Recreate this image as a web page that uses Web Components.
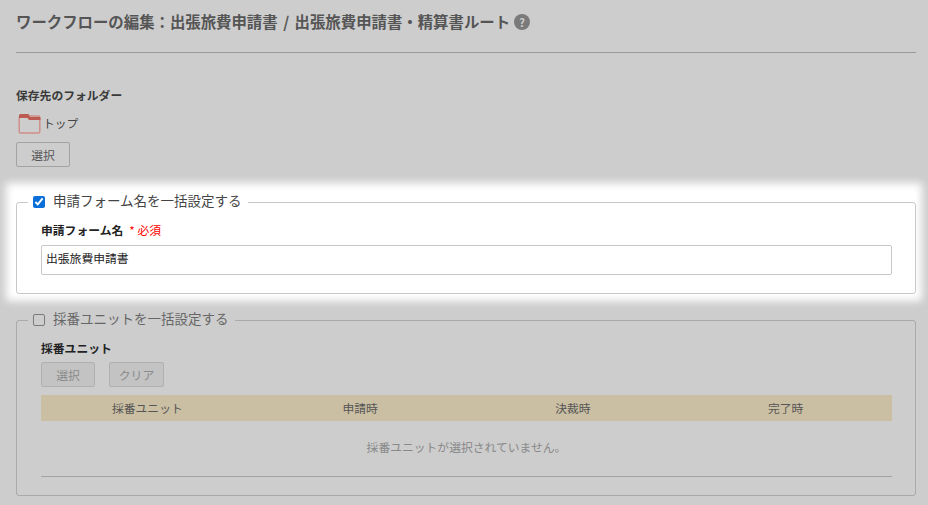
<!DOCTYPE html>
<html lang="ja">
<head>
<meta charset="utf-8">
<title>ワークフローの編集</title>
<style>
  html, body { margin: 0; height: 100%; overflow: hidden; }
  body {
    background: #cdcdcd;
    color: #333;
    font: 11.8px/1.5 "Noto Sans CJK JP", "Noto Sans", sans-serif;
  }
</style>
</head>
<body>
<wf-page>
  <wf-title slot="title">ワークフローの編集：出張旅費申請書 / 出張旅費申請書・精算書ルート</wf-title>
  <wf-folder label="保存先のフォルダー" name="トップ"></wf-folder>
  <wf-section checked highlight legend="申請フォーム名を一括設定する">
    <wf-label required>申請フォーム名</wf-label>
    <wf-input value="出張旅費申請書"></wf-input>
  </wf-section>
  <wf-section legend="採番ユニットを一括設定する">
    <wf-label>採番ユニット</wf-label>
    <wf-unit-table></wf-unit-table>
  </wf-section>
</wf-page>

<script>
class WfPage extends HTMLElement {
  connectedCallback() {
    this.attachShadow({ mode: 'open' });
    this.shadowRoot.innerHTML = `
      <style>
        :host { display: flex; flex-direction: column; padding: 0 12px 0 16px; }
      </style>
      <slot name="title"></slot>
      <slot></slot>
    `;
  }
}

class WfTitle extends HTMLElement {
  connectedCallback() {
    this.attachShadow({ mode: 'open' });
    this.shadowRoot.innerHTML = `
      <style>
        :host {
          display: flex;
          align-items: center;
          gap: 4px;
          padding-bottom: 10px;
          box-sizing: border-box;
          height: 53px;
          border-bottom: 1px solid #999;
          font-size: 15.4px;
          font-weight: 700;
          color: #555;
          word-spacing: 2px;
          line-height: 42px;
        }
        .help {
          width: 16px;
          height: 16px;
          margin-top: 2px;
          border-radius: 50%;
          background: #7a7a7a;
          color: #ccc;
          font-size: 11px;
          line-height: 16px;
          text-align: center;
        }
      </style>
      <slot></slot><span class="help">?</span>
    `;
  }
}

class WfButton extends HTMLElement {
  connectedCallback() {
    this.attachShadow({ mode: 'open' });
    this.shadowRoot.innerHTML = `
      <style>
        :host {
          display: block;
          box-sizing: border-box;
          width: 54px;
          height: 25px;
          border: 1px solid #a3a3a3;
          border-radius: 2px;
          color: #555;
          line-height: 23px;
          text-align: center;
        }
        :host([disabled]) {
          background: #c3c3c3;
          color: #8a8a8a;
          border-color: #b0b0b0;
        }
      </style>
      <slot></slot>
    `;
  }
}

class WfFolder extends HTMLElement {
  connectedCallback() {
    this.attachShadow({ mode: 'open' });
    this.shadowRoot.innerHTML = `
      <style>
        :host { display: block; margin-top: 32px; }
        .label { font-weight: 700; line-height: 20px; color: #3a3a3a; }
        .row { display: flex; align-items: center; height: 24px; margin-top: 6px; margin-bottom: 7px; color: #444; }
        svg { margin: 0 2px 0 2px; }
      </style>
      <div class="label">${this.getAttribute('label')}</div>
      <div class="row">
        <svg width="23" height="21" viewBox="0 0 23 21">
          <rect x="1.2" y="3" width="20.6" height="17" rx="1.5" fill="none" stroke="#cf8f89" stroke-width="1.5"/>
          <path d="M1 5V2.5Q1 1 2.5 1H10.5L12 4H21.5Q22.5 4 22.5 5.5V7H11L9.5 5Z" fill="#bd5a52"/>
        </svg>
        <span>${this.getAttribute('name')}</span>
      </div>
      <wf-button>選択</wf-button>
    `;
  }
}

class WfSection extends HTMLElement {
  connectedCallback() {
    const on = this.hasAttribute('checked');
    this.attachShadow({ mode: 'open' });
    this.shadowRoot.innerHTML = `
      <style>
        :host { display: block; margin-top: 16px; }
        :host([highlight]) {
          margin-top: 25px;
          background: #fff;
          box-shadow: -2px -1.5px 8px 8px #fff;
        }
        fieldset {
          margin: 0;
          padding: 9px 23px 18px 24px;
          border: 1px solid #aaa;
          border-radius: 3px;
          min-width: 0;
        }
        :host([highlight]) fieldset { border-color: #c8c8c8; }
        legend {
          display: flex;
          align-items: center;
          gap: 8px;
          height: 20px;
          padding: 0 6px 0 5px;
          margin-left: -13px;
          font-size: 13.5px;
          color: #666;
        }
        legend span { line-height: 16px; margin-bottom: 4px; }
        :host([highlight]) legend { color: #444; }
        input { width: 12px; height: 12px; margin: 0; accent-color: #0a6fd8; }
        :host(:not([highlight])) input {
          appearance: none;
          box-sizing: border-box;
          border: 1px solid #7a7a7a;
          border-radius: 2px;
          background: transparent;
        }
      </style>
      <fieldset>
        <legend><input type="checkbox" ${on ? 'checked' : ''}><span>${this.getAttribute('legend')}</span></legend>
        <slot></slot>
      </fieldset>
    `;
  }
}

class WfLabel extends HTMLElement {
  connectedCallback() {
    const req = this.hasAttribute('required');
    this.attachShadow({ mode: 'open' });
    this.shadowRoot.innerHTML = `
      <style>
        :host { display: block; font-weight: 700; line-height: 18px; color: #222; }
        .req { color: #f00; font-weight: 400; margin-left: 6px; }
      </style>
      <slot></slot>${req ? '<span class="req">* 必須</span>' : ''}
    `;
  }
}

class WfInput extends HTMLElement {
  connectedCallback() {
    this.attachShadow({ mode: 'open' });
    this.shadowRoot.innerHTML = `
      <style>
        :host {
          display: block;
          box-sizing: border-box;
          height: 30px;
          margin-top: 6px;
          padding: 0 4px;
          border: 1px solid #c8c8c8;
          border-radius: 2px;
          background: #fff;
          color: #222;
          line-height: 23px;
        }
      </style>
      ${this.getAttribute('value')}
    `;
  }
}

class WfUnitTable extends HTMLElement {
  connectedCallback() {
    this.attachShadow({ mode: 'open' });
    this.shadowRoot.innerHTML = `
      <style>
        :host { display: block; }
        .actions { display: flex; gap: 14px; margin-top: 5px; }
        .head {
          display: grid;
          grid-template-columns: repeat(4, 1fr);
          height: 26px;
          margin-top: 8px;
          background: #cbbfa3;
          color: #555;
          line-height: 26px;
          text-align: center;
        }
        .empty {
          height: 55px;
          line-height: 52px;
          border-bottom: 1px solid #a3a3a3;
          text-align: center;
          color: #888;
        }
      </style>
      <div class="actions">
        <wf-button disabled>選択</wf-button>
        <wf-button disabled style="width:55px">クリア</wf-button>
      </div>
      <div class="head"><span>採番ユニット</span><span>申請時</span><span>決裁時</span><span>完了時</span></div>
      <div class="empty">採番ユニットが選択されていません。</div>
    `;
  }
}

customElements.define('wf-page', WfPage);
customElements.define('wf-title', WfTitle);
customElements.define('wf-button', WfButton);
customElements.define('wf-folder', WfFolder);
customElements.define('wf-section', WfSection);
customElements.define('wf-label', WfLabel);
customElements.define('wf-input', WfInput);
customElements.define('wf-unit-table', WfUnitTable);
</script>
</body>
</html>
